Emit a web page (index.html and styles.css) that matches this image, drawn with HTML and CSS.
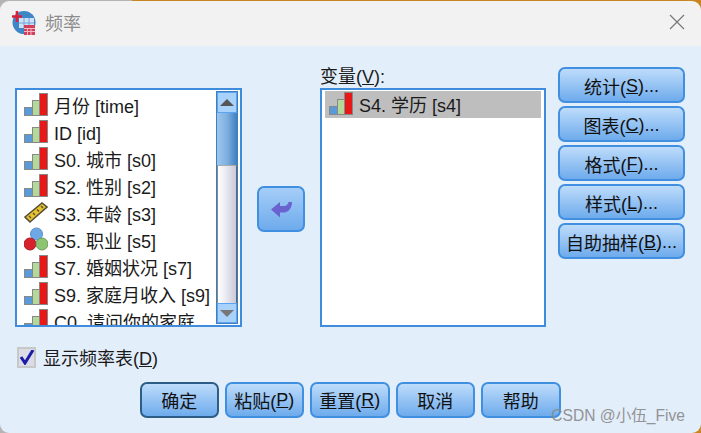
FILE: index.html
```html
<!DOCTYPE html>
<html lang="zh-CN">
<head>
    <meta charset="UTF-8">
    <title>频率</title>
    <link rel="stylesheet" href="styles.css">
</head>
<body>
    <svg class="defs" width="0" height="0">
        <symbol id="bars" viewBox="0 0 24 24">
            <rect x="0.5" y="15.500" width="8" height="8" fill="#5a9ad8" stroke="#888"/>
            <rect x="8.500" y="8.500" width="7" height="15" fill="#b4d89a" stroke="#888"/>
            <rect x="15.500" y="1.500" width="8" height="22" fill="#e81818" stroke="#888"/>
        </symbol>
        <symbol id="ruler" viewBox="0 0 24 24">
            <path d="M1 17 L18 3 L23 7 L6 22 Z" fill="#e8c12e" stroke="#54503a" stroke-width="1.600"/>
            <path d="M5 16l2 2M9 13l2 2M13 9.500l2 2M17 6l2 2" stroke="#54503a" stroke-width="1.400"/>
        </symbol>
        <symbol id="dots" viewBox="0 0 24 24">
            <circle cx="12.500" cy="7" r="6" fill="#6fa8e6" stroke="#5a8cc6"/>
            <circle cx="6" cy="17" r="6" fill="#d8222c" stroke="#a81820"/>
            <circle cx="18" cy="17" r="6" fill="#8cc472" stroke="#6c9c58"/>
        </symbol>
    </svg>

    <div class="window">
        <header class="titlebar">
            <svg class="app-icon" width="25" height="25" viewBox="0 0 25 25">
                <circle cx="13" cy="12.500" r="11.500" fill="#3f86c6"/>
                <rect x="8" y="8" width="15" height="10" fill="#cfe2f5"/>
                <path d="M8 13h15M13 8v10M18 8v10" stroke="#6fa3d6"/>
                <path d="M1 6.500h10M6 1v11" stroke="#d8203a" stroke-width="2.600"/>
                <rect x="13" y="15" width="11" height="10" fill="#d0405c"/>
                <path d="M13 18.500h11M13 21.500h11M16.500 18v7M20 18v7" stroke="#f2b8c4"/>
            </svg>
            <h1>频率</h1>
            <svg class="close" width="16" height="16" viewBox="0 0 16 16">
                <path d="M1 1L15 15M15 1L1 15" stroke="#777" stroke-width="1.200"/>
            </svg>
        </header>

        <div class="content">
            <div class="main">
                <div class="list source">
                    <ul>
                        <li><svg class="var-icon"><use href="#bars"/></svg>月份 [time]</li>
                        <li class="latin"><svg class="var-icon"><use href="#bars"/></svg>ID [id]</li>
                        <li><svg class="var-icon"><use href="#bars"/></svg>S0. 城市 [s0]</li>
                        <li><svg class="var-icon"><use href="#bars"/></svg>S2. 性别 [s2]</li>
                        <li><svg class="var-icon"><use href="#ruler"/></svg>S3. 年龄 [s3]</li>
                        <li><svg class="var-icon"><use href="#dots"/></svg>S5. 职业 [s5]</li>
                        <li><svg class="var-icon"><use href="#bars"/></svg>S7. 婚姻状况 [s7]</li>
                        <li><svg class="var-icon"><use href="#bars"/></svg>S9. 家庭月收入 [s9]</li>
                        <li><svg class="var-icon"><use href="#bars"/></svg>C0. 请问你的家庭</li>
                    </ul>
                    <div class="scrollbar">
                        <div class="scroll-btn"><span class="arrow-up"></span></div>
                        <div class="thumb"></div>
                        <div class="track"></div>
                        <div class="scroll-btn down"><span class="arrow-down"></span></div>
                    </div>
                </div>

                <div class="move-col">
                    <button class="btn move">
                        <svg width="24" height="24" viewBox="0 0 24 24">
                            <path d="M2 12.500 L11 5 V9 L16 9 C18 8.500 19 7 19.500 5 L23 5 C23 11 20 15 15 15.500 L11 15.500 V20.500 Z" fill="#6a63cf"/>
                        </svg>
                    </button>
                </div>

                <div class="target">
                    <label class="target-label">变量(<u>V</u>):</label>
                    <div class="list chosen">
                        <ul>
                            <li class="selected"><svg class="var-icon"><use href="#bars"/></svg>S4. 学历 [s4]</li>
                        </ul>
                    </div>
                </div>

                <div class="side-buttons">
                    <button class="btn">统计(<u>S</u>)...</button>
                    <button class="btn">图表(<u>C</u>)...</button>
                    <button class="btn">格式(<u>F</u>)...</button>
                    <button class="btn">样式(<u>L</u>)...</button>
                    <button class="btn">自助抽样(<u>B</u>)...</button>
                </div>
            </div>

            <div class="check-row">
                <span class="checkbox">
                    <svg width="15" height="15" viewBox="0 0 15 15">
                        <path d="M2 7 L6 13 L14 0" fill="none" stroke="#1c1ca8" stroke-width="3"/>
                    </svg>
                </span>
                <span>显示频率表(<u>D</u>)</span>
            </div>

            <div class="actions">
                <button class="btn default">确定</button>
                <button class="btn">粘贴(<u>P</u>)</button>
                <button class="btn">重置(<u>R</u>)</button>
                <button class="btn">取消</button>
                <button class="btn">帮助</button>
            </div>
        </div>
    </div>

    <div class="watermark">CSDN @小伍_Five</div>
</body>
</html>
```

FILE: styles.css
```css
* {
    box-sizing: border-box;
}
html, body {
    height: 100%;
}
body {
    margin: 0;
    padding-top: 1px;
    overflow: hidden;
    position: relative;
    background: linear-gradient(to right, #b4b4b4 132px, #c9851f 132px);
    font-family: "Liberation Sans", "Noto Sans CJK SC", sans-serif;
    font-size: 18px;
    color: #1a1a1a;
}
.defs {
    position: absolute;
}
.window {
    height: 432px;
    display: flex;
    flex-direction: column;
    border-radius: 9px;
    overflow: hidden;
}
.titlebar {
    height: 45px;
    flex: none;
    display: flex;
    align-items: center;
    padding: 0 16px 3px 11px;
    background-color: #f2f2f2;
}
.app-icon {
    flex: none;
}
.titlebar h1 {
    margin: 0 0 0 9px;
    font-size: 18px;
    font-weight: normal;
    color: #8c8c8c;
}
.close {
    margin-left: auto;
}
.content {
    flex: 1;
    padding: 21px 16px 0 15px;
    background-color: #e3eefb;
}
.main {
    display: flex;
    height: 260px;
}
.list {
    border: 2px solid #3f8bdc;
    background-color: white;
    overflow: hidden;
}
.list ul {
    list-style: none;
    margin: 0;
    padding: 0;
}
.list li {
    height: 27px;
    padding-bottom: 2px;
    display: flex;
    align-items: center;
    white-space: nowrap;
}
.list li.latin {
    padding: 4px 0 0;
}
.var-icon {
    width: 24px;
    height: 24px;
    margin: -2px 6px 0 0;
    flex: none;
}
.latin .var-icon {
    margin-top: -8px;
}
.source {
    width: 227px;
    height: 239px;
    margin-top: 21px;
    display: flex;
}
.source ul {
    flex: 1;
    min-width: 0;
    padding: 2px 0 0 7px;
    overflow: hidden;
}
.scrollbar {
    width: 22px;
    margin: 1px 2px 1px 0;
    flex: none;
    display: flex;
    flex-direction: column;
    border: 1px solid #3f7fc0;
}
.scroll-btn {
    height: 21px;
    flex: none;
    display: flex;
    align-items: center;
    justify-content: center;
    background: #a9d2fb;
    border: 1px solid #5aa4f2;
}
.scroll-btn.down {
    height: 20px;
}
.arrow-up, .arrow-down {
    width: 0;
    height: 0;
    border-left: 7px solid transparent;
    border-right: 7px solid transparent;
}
.arrow-up {
    border-bottom: 7px solid #555;
}
.arrow-down {
    border-top: 7px solid #777;
}
.thumb {
    height: 52px;
    flex: none;
    background: linear-gradient(to right, #9cc6ee, #7fb0e0 50%, #3f7fc0);
}
.track {
    flex: 1;
    background: linear-gradient(to right, #fff, #e6e6f0 50%, #c9c9d8);
    border-left: 1px solid #888;
    border-right: 1px solid #666;
    border-top: 1px solid #aaa;
}
.move-col {
    width: 78px;
    flex: none;
    padding: 119px 0 0 15px;
}
.btn {
    display: flex;
    align-items: center;
    justify-content: center;
    padding: 0;
    font: inherit;
    color: #111;
    white-space: nowrap;
    border: 2px solid #418fe0;
    border-radius: 7px;
    background: linear-gradient(#bedcfb, #6eabec);
}
.btn.move {
    width: 48px;
    height: 46px;
    background: linear-gradient(#a5cdf7, #6eabec);
}
.target {
    width: 226px;
    flex: none;
}
.target-label {
    display: block;
    height: 21px;
    line-height: 20px;
}
.chosen {
    height: 239px;
}
.chosen ul {
    padding: 1px 3px;
}
.selected {
    background-color: #bebebe;
    padding-left: 4px;
}
.side-buttons {
    margin-left: 12px;
    width: 127px;
    flex: none;
    display: flex;
    flex-direction: column;
    gap: 3px;
}
.side-buttons .btn {
    height: 36px;
    padding-top: 2px;
}
.check-row {
    display: flex;
    align-items: center;
    gap: 7px;
    height: 22px;
    margin: 19px 0 0 2px;
}
.checkbox {
    width: 19px;
    height: 21px;
    display: flex;
    align-items: center;
    justify-content: center;
    background-color: #dcdce6;
    border: 2px solid #c8c8c8;
}
.actions {
    display: flex;
    gap: 6px;
    margin: 14px 0 0 125px;
}
.actions .btn {
    width: 79.500px;
    height: 36px;
}
.actions .default {
    width: 78.500px;
    border-color: #2c5c88;
}
.watermark {
    position: absolute;
    right: 16px;
    bottom: 8px;
    font-size: 15.600px;
    color: #8a8a8a;
    opacity: 0.9;
}
```
